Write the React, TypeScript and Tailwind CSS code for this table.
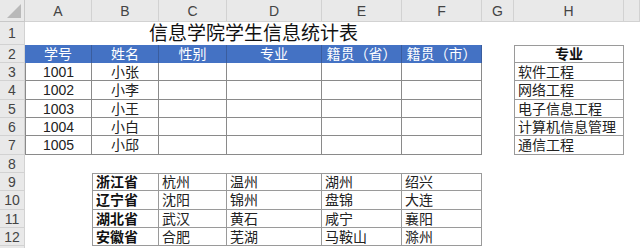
import React from 'react'

const FONT = { fontFamily: '"Liberation Sans", "Noto Sans CJK SC", sans-serif' }

const COLS = ['A', 'B', 'C', 'D', 'E', 'F', 'G', 'H', '']

const students = [
  ['1001', '小张'],
  ['1002', '小李'],
  ['1003', '小王'],
  ['1004', '小白'],
  ['1005', '小邱'],
]

const majors = ['软件工程', '网络工程', '电子信息工程', '计算机信息管理', '通信工程']

const regions = [
  ['浙江省', '杭州', '温州', '湖州', '绍兴'],
  ['辽宁省', '沈阳', '锦州', '盘锦', '大连'],
  ['湖北省', '武汉', '黄石', '咸宁', '襄阳'],
  ['安徽省', '合肥', '芜湖', '马鞍山', '滁州'],
]

const headCols = ['学号', '姓名', '性别', '专业', '籍贯（省）', '籍贯（市）']

const rowHead = 'flex items-center justify-center bg-[#e9e9e9] border-r border-b border-[#d2d2d2] text-[14px] leading-[16px] text-[#444]'
const blank = 'bg-white'
const mainCell = 'flex items-center justify-center border-r border-b border-[#8a8a8a] text-[14px] leading-[16px] text-[#222] bg-white'
const mainFirst = 'flex items-center justify-center border-l border-r border-b border-[#8a8a8a] text-[14px] leading-[16px] text-[#222] bg-white'
const blueCell = 'flex items-center justify-center bg-[#4472c4] border-r border-[#3a5d9e] text-[14px] leading-[16px] text-white'
const majorCell = 'flex items-center px-[3px] border-l border-r border-b border-[#9a9a9a] text-[14px] leading-[16px] text-[#222] bg-white'
const regionFirst = 'flex items-center px-[3px] border-l border-r border-b border-[#9a9a9a] text-[14px] leading-[16px] font-bold text-[#111] bg-white'
const regionCell = 'flex items-center px-[3px] border-r border-b border-[#9a9a9a] text-[14px] leading-[16px] text-[#222] bg-white'
const regionTopFirst = 'flex items-center px-[3px] border-l border-t border-r border-b border-[#9a9a9a] text-[14px] leading-[16px] font-bold text-[#111] bg-white'
const regionTop = 'flex items-center px-[3px] border-t border-r border-b border-[#9a9a9a] text-[14px] leading-[16px] text-[#222] bg-white'

export default function App() {
  return (
    <div
      className="grid h-[248px] w-[640px] overflow-hidden bg-white grid-cols-[25px_67px_67px_68px_95px_80px_80px_32px_110px_1fr] grid-rows-[22px_23px_18px_18px_19px_18px_18px_19px_18px_18px_19px_18px_18px_1fr]"
      style={FONT}
    >
      {/* column header bar */}
      <div className="relative bg-[#e9e9e9] border-r border-b border-[#c8c8c8]">
        <svg className="absolute right-[3px] bottom-[3px]" width="14" height="14" viewBox="0 0 14 14">
          <polygon points="14,0 14,14 0,14" fill="#b9b9b9" />
        </svg>
      </div>
      {COLS.map((c, i) => (
        <div key={'h' + i} className="flex items-center justify-center bg-[#e9e9e9] border-r border-b border-[#d2d2d2] text-[14px] leading-[16px] text-[#444]">
          {c}
        </div>
      ))}

      {/* row 1: merged title */}
      <div className={rowHead}>1</div>
      <div className="col-span-6 flex items-end justify-center bg-white text-[19px] leading-[22px] text-[#111]">
        信息学院学生信息统计表
      </div>
      <div className={blank} />
      <div className={blank} />
      <div className={blank} />

      {/* row 2: blue header + major title */}
      <div className={rowHead}>2</div>
      {headCols.map((t) => (
        <div key={t} className={blueCell}>{t}</div>
      ))}
      <div className={blank} />
      <div className="flex items-center justify-center border border-[#9a9a9a] text-[14px] leading-[16px] font-bold text-[#111] bg-white">专业</div>
      <div className={blank} />

      {/* rows 3-7 */}
      {students.map(([id, name], i) => (
        <React.Fragment key={id}>
          <div className={rowHead}>{i + 3}</div>
          <div className={mainFirst}>{id}</div>
          <div className={mainCell}>{name}</div>
          <div className={mainCell} />
          <div className={mainCell} />
          <div className={mainCell} />
          <div className={mainCell} />
          <div className={blank} />
          <div className={majorCell}>{majors[i]}</div>
          <div className={blank} />
        </React.Fragment>
      ))}

      {/* row 8 */}
      <div className={rowHead}>8</div>
      <div className="col-span-9 bg-white" />

      {/* rows 9-12: provinces and cities */}
      {regions.map((r, i) => (
        <React.Fragment key={r[0]}>
          <div className={rowHead}>{i + 9}</div>
          <div className={blank} />
          {r.map((t, j) =>
            i === 0 ? (
              <div key={t} className={j === 0 ? regionTopFirst : regionTop}>{t}</div>
            ) : (
              <div key={t} className={j === 0 ? regionFirst : regionCell}>{t}</div>
            )
          )}
          <div className={blank} />
          <div className={blank} />
          <div className={blank} />
        </React.Fragment>
      ))}

      {/* partial row 13 */}
      <div className="bg-[#e9e9e9] border-r border-[#d2d2d2]" />
      <div className="col-span-9 bg-white" />
    </div>
  )
}
